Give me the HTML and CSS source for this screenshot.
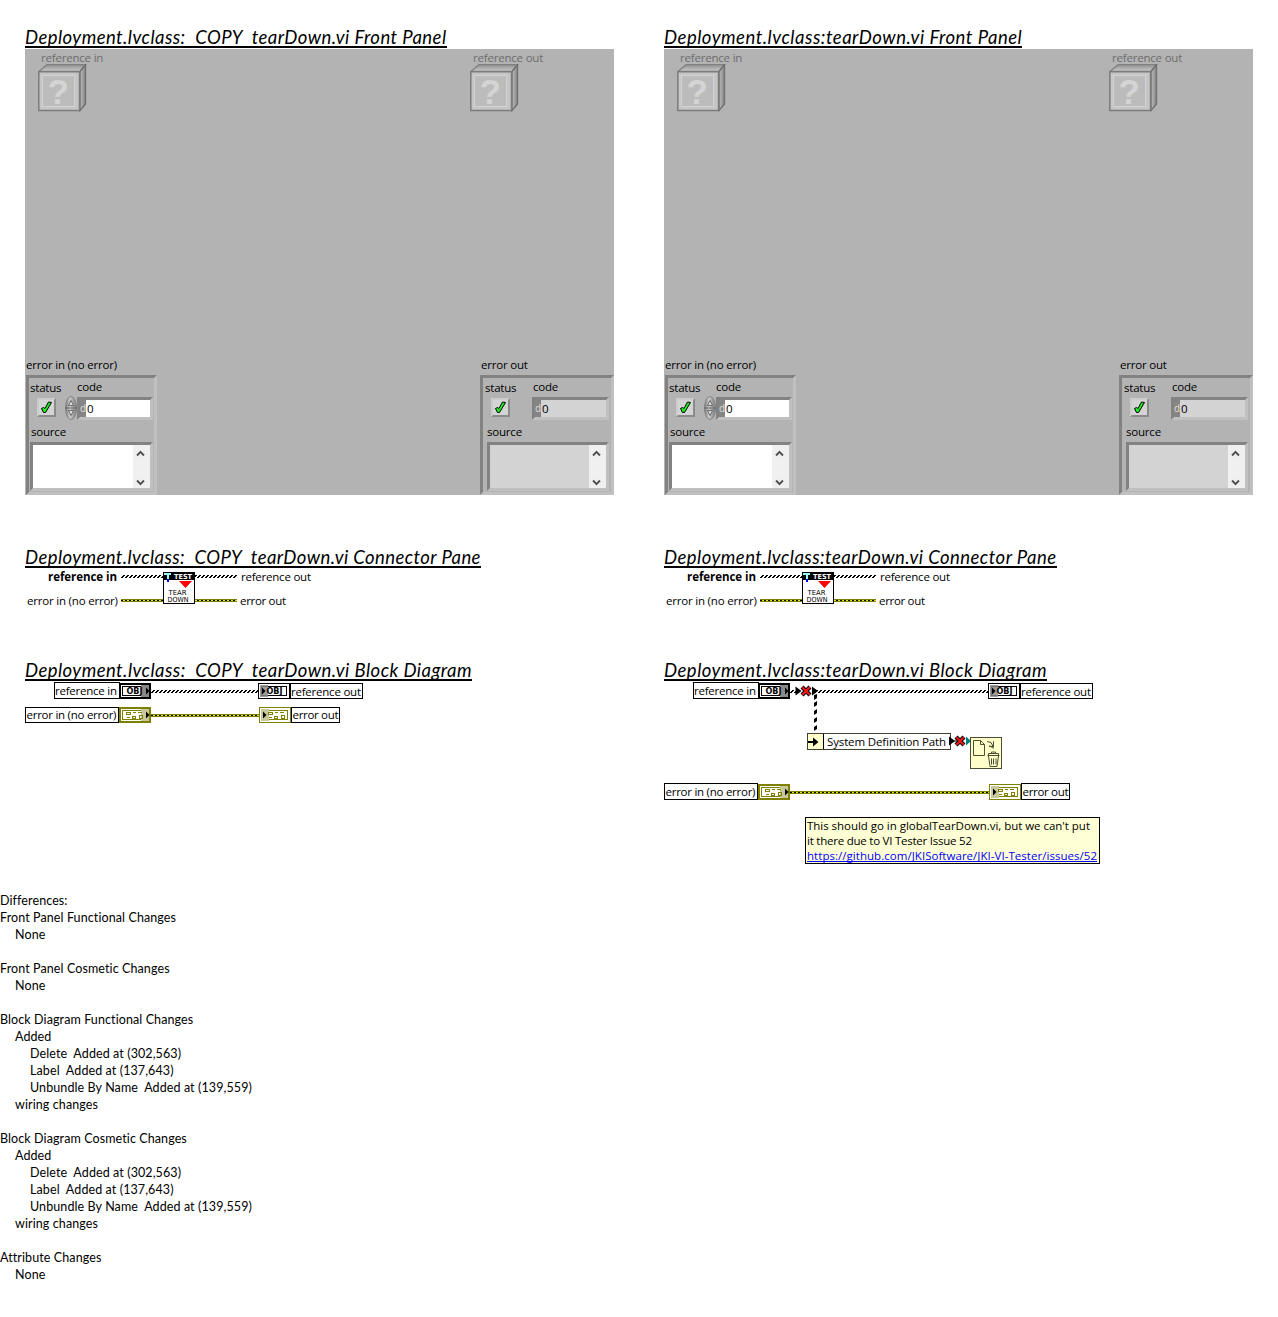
FILE: index.html
```
<!DOCTYPE html>
<html lang="en">
<head>
<meta charset="utf-8">
<title>Deployment.lvclass tearDown.vi</title>
<link rel="stylesheet" href="styles.css">
</head>
<body>
<svg class="defs" width="0" height="0" aria-hidden="true">
  <defs>
    <linearGradient id="cubeTop" x1="0" y1="0" x2="0" y2="1"><stop offset="0" stop-color="#929292"/><stop offset="1" stop-color="#cacaca"/></linearGradient>
    <linearGradient id="cubeSide" x1="0" y1="0" x2="1" y2="0"><stop offset="0" stop-color="#bdbdbd"/><stop offset="1" stop-color="#858585"/></linearGradient>
    <linearGradient id="knob" x1="0" y1="0" x2="1" y2="0"><stop offset="0" stop-color="#777"/><stop offset=".4" stop-color="#ccc"/><stop offset="1" stop-color="#777"/></linearGradient>
    <pattern id="objWire" width="4" height="3" patternUnits="userSpaceOnUse"><path d="M0 0h4v3h-4z" fill="#fff"/><path d="M2 0h2v1h-2zM1 1h2v1h-2zM0 2h2v1h-2z"/></pattern>
    <pattern id="errWire" width="4" height="4" patternUnits="userSpaceOnUse"><path d="M0 0h4v4h-4z" fill="#808000"/><path d="M0 1h4v1h-4z" fill="#e6e628"/><path d="M0 1h2v1h-2z"/></pattern>
    <symbol id="cube" viewBox="0 0 49 48">
      <path d="M1 7.500 9 .700H47.500L42 7.500z" fill="url(#cubeTop)" stroke="#808080" stroke-width="1.300"/>
      <path d="M42 7.500 47.500 .700V40L42 46.500z" fill="url(#cubeSide)" stroke="#6e6e6e" stroke-width="1.300"/>
      <path d="M.800 7.800H41.500V46.500H.800z" class="cube-face" stroke="#7c7c7c" stroke-width="1.500"/>
      <path d="M4.500 11.500H36.500V42.500H4.500z" class="cube-inset" stroke="#d2d2d2"/>
      <text x="9.500" y="39.500" class="cube-mark">?</text>
    </symbol>
    <symbol id="check" viewBox="0 0 13 13"><path d="M1.500 7.500 3.500 6.500 5 7.500 8.500 1 11.500 1.500 5.500 11.500H3.500z" fill="#1cf01c" stroke="#000"/></symbol>
    <symbol id="spin" viewBox="0 0 12 24"><ellipse cx="6" cy="12" rx="5.500" ry="11.500" fill="url(#knob)" stroke="#858585"/><path d="M0 12h12" stroke="#666"/><path d="M3.500 9.500 6 4.500 8.500 9.500zM3.500 14.500 6 19.500 8.500 14.500z" fill="#ddd" stroke="#555" stroke-width=".8"/></symbol>
    <symbol id="objIn" viewBox="0 0 32 16"><g shape-rendering="crispEdges"><path d="M0 0h32v16H0z"/><path d="M2 2h28v12H2z" fill="#fff"/><path d="M3.500 3.500h25v9h-25z" fill="#fff" stroke="#000"/><path d="M22 2h8v12h-8z" fill="#888"/></g><text x="7.500" y="11" class="obj" textLength="16" lengthAdjust="spacingAndGlyphs">OBJ</text><path d="M27 4.500v7l3.500-3.500z"/></symbol>
    <symbol id="objOut" viewBox="0 0 32 16"><g shape-rendering="crispEdges"><path d="M.500.500h31v15H.500z" fill="#fff" stroke="#000"/><path d="M3.500 3.500h25v9h-25z" fill="none" stroke="#000"/><path d="M2 2h8v12H2z" fill="#888" opacity=".85"/></g><text x="8.500" y="11" class="obj" textLength="16" lengthAdjust="spacingAndGlyphs">OBJ</text><path d="M4 4.500v7l3.500-3.500z"/></symbol>
    <symbol id="cells" viewBox="0 0 20 10"><path d="M1.500 1.500h4v2h-4zM8 1.500h3M13 1.500h4M1.500 6.500h3M7.500 5.500h3v2h-3zM14.500 4.500h3v3h-3z" fill="none" stroke="#808000" shape-rendering="crispEdges"/></symbol>
    <symbol id="errIn" viewBox="0 0 32 16"><g shape-rendering="crispEdges"><path d="M0 0h32v16H0z" fill="#808000"/><path d="M2 2h28v12H2z" fill="#fff"/><path d="M3.500 3.500h25v9h-25z" fill="#fff" stroke="#808000"/><path d="M22 2h8v12h-8z" fill="#c8c89a"/></g><use href="#cells" x="6" y="4" width="20" height="10"/><path d="M27 4.500v7l3.500-3.500z"/></symbol>
    <symbol id="errOut" viewBox="0 0 32 16"><g shape-rendering="crispEdges"><path d="M.500.500h31v15H.500z" fill="#fff" stroke="#808000"/><path d="M3.500 3.500h25v9h-25z" fill="none" stroke="#808000"/><path d="M2 2h8v12H2z" fill="#c8c89a"/></g><use href="#cells" x="8" y="4" width="20" height="10"/><path d="M4 4.500v7l3.500-3.500z"/></symbol>
    <symbol id="broken" viewBox="0 0 12 12"><path d="M2 2 10 10M10 2 2 10" stroke="#000" stroke-width="4.200"/><path d="M2.300 2.300 9.700 9.700M9.700 2.300 2.300 9.700" stroke="#f01818" stroke-width="2.200"/></symbol>
    <symbol id="viIcon" viewBox="0 0 32 32">
      <g shape-rendering="crispEdges"><path d="M.500.500h31v31H.500z" fill="#fff" stroke="#000"/><path d="M0 0h32v8H0z"/><path d="M1 1h7v2H1z" fill="#9ff"/><path d="M4 3h2v5H4z" fill="#9ff"/><path d="M4 7h2v3H4z" fill="#00f"/></g>
      <path d="M16 9h13l-6.500 7z" fill="#f00"/>
      <text x="11" y="6.500" class="tiny tiny-light" textLength="18" lengthAdjust="spacingAndGlyphs">TEST</text>
      <text x="5.500" y="23" class="tiny" textLength="18" lengthAdjust="spacingAndGlyphs">TEAR</text>
      <text x="4.500" y="30" class="tiny" textLength="21" lengthAdjust="spacingAndGlyphs">DOWN</text>
    </symbol>
    <g id="connector">
      <text x="48" y="581" class="strong" textLength="69">reference in</text>
      <text x="27" y="605" textLength="91">error in (no error)</text>
      <text x="241" y="581" textLength="70">reference out</text>
      <text x="240" y="605" textLength="46">error out</text>
      <g transform="translate(121 575)"><path d="M0 0h42v3H0zM74 0h42v3H74z" fill="url(#objWire)"/></g>
      <g transform="translate(121 599)" shape-rendering="crispEdges"><path d="M0 0h42v3H0zM74 0h42v3H74z" fill="url(#errWire)"/></g>
      <use href="#viIcon" x="163" y="572" width="32" height="32"/>
    </g>
  </defs>
</svg>

<main class="compare">
  <section class="vi">
    <h2 class="title t-front-copy">Deployment.lvclass:  COPY  tearDown.vi Front Panel</h2>
    <div class="panel">
      <div class="ref ref-in"><span>reference in</span><svg width="49" height="48"><use href="#cube"/></svg></div>
      <div class="ref ref-out"><span>reference out</span><svg width="49" height="48"><use href="#cube"/></svg></div>
      <div class="err err-in"><span class="caption">error in (no error)</span>
        <div class="cluster">
          <div class="labels"><span>status</span><span>code</span></div>
          <div class="values"><i class="led"><svg width="13" height="13"><use href="#check"/></svg></i><svg class="spin" width="12" height="24"><use href="#spin"/></svg><div class="num"><b>d</b><span>0</span></div></div>
          <div class="source">source</div>
          <div class="text"><div class="bar"><svg width="16" height="42" viewBox="0 0 16 42"><path d="M4 10.500 7.500 7 11 10.500M4 35.500 7.500 39 11 35.500"/></svg></div></div>
        </div>
      </div>
      <div class="err err-out"><span class="caption">error out</span>
        <div class="cluster">
          <div class="labels"><span>status</span><span>code</span></div>
          <div class="values"><i class="led"><svg width="13" height="13"><use href="#check"/></svg></i><div class="num"><b>d</b><span>0</span></div></div>
          <div class="source">source</div>
          <div class="text"><div class="bar"><svg width="16" height="42" viewBox="0 0 16 42"><path d="M4 10.500 7.500 7 11 10.500M4 35.500 7.500 39 11 35.500"/></svg></div></div>
        </div>
      </div>
    </div>
    <h2 class="title t-conn-copy">Deployment.lvclass:  COPY  tearDown.vi Connector Pane</h2>
    <svg class="pane" viewBox="25 569 589 39"><use href="#connector"/></svg>
    <h2 class="title t-block-copy">Deployment.lvclass:  COPY  tearDown.vi Block Diagram</h2>
    <svg class="diagram" viewBox="25 682 589 190">
      <g class="box"><path d="M54.500 682.500h65v16h-65zM290.500 683.500h72v15h-72zM25.500 707.500h93v15h-93zM291.500 707.500h48v15h-48z"/></g>
      <text x="55" y="695" textLength="62">reference in</text><text x="291" y="696" textLength="70">reference out</text>
      <text x="26.500" y="719" textLength="90">error in (no error)</text><text x="292.500" y="719" textLength="46">error out</text>
      <g transform="translate(151 690)"><path d="M0 0h107v3H0z" fill="url(#objWire)"/></g>
      <g transform="translate(151 714)" shape-rendering="crispEdges"><path d="M0 0h108v3H0z" fill="url(#errWire)"/></g>
      <use href="#objIn" x="119" y="683" width="32" height="16"/><use href="#objOut" x="258" y="683" width="32" height="16"/>
      <use href="#errIn" x="119" y="707" width="32" height="16"/><use href="#errOut" x="259" y="707" width="32" height="16"/>
    </svg>
  </section>

  <section class="vi">
    <h2 class="title t-front">Deployment.lvclass:tearDown.vi Front Panel</h2>
    <div class="panel">
      <div class="ref ref-in"><span>reference in</span><svg width="49" height="48"><use href="#cube"/></svg></div>
      <div class="ref ref-out"><span>reference out</span><svg width="49" height="48"><use href="#cube"/></svg></div>
      <div class="err err-in"><span class="caption">error in (no error)</span>
        <div class="cluster">
          <div class="labels"><span>status</span><span>code</span></div>
          <div class="values"><i class="led"><svg width="13" height="13"><use href="#check"/></svg></i><svg class="spin" width="12" height="24"><use href="#spin"/></svg><div class="num"><b>d</b><span>0</span></div></div>
          <div class="source">source</div>
          <div class="text"><div class="bar"><svg width="16" height="42" viewBox="0 0 16 42"><path d="M4 10.500 7.500 7 11 10.500M4 35.500 7.500 39 11 35.500"/></svg></div></div>
        </div>
      </div>
      <div class="err err-out"><span class="caption">error out</span>
        <div class="cluster">
          <div class="labels"><span>status</span><span>code</span></div>
          <div class="values"><i class="led"><svg width="13" height="13"><use href="#check"/></svg></i><div class="num"><b>d</b><span>0</span></div></div>
          <div class="source">source</div>
          <div class="text"><div class="bar"><svg width="16" height="42" viewBox="0 0 16 42"><path d="M4 10.500 7.500 7 11 10.500M4 35.500 7.500 39 11 35.500"/></svg></div></div>
        </div>
      </div>
    </div>
    <h2 class="title t-conn">Deployment.lvclass:tearDown.vi Connector Pane</h2>
    <svg class="pane" viewBox="25 569 589 39"><use href="#connector"/></svg>
    <h2 class="title t-block">Deployment.lvclass:tearDown.vi Block Diagram</h2>
    <svg class="diagram" viewBox="664 682 589 190">
      <g class="box"><path d="M693.500 682.500h65v16h-65zM1020.500 683.500h72v15h-72zM664.500 783.500h93v16h-93zM1021.500 783.500h48v16h-48z"/></g>
      <text x="694" y="695" textLength="62">reference in</text><text x="1021" y="696" textLength="70">reference out</text>
      <text x="665.500" y="796" textLength="90">error in (no error)</text><text x="1022.500" y="796" textLength="46">error out</text>
      <g transform="translate(790 690)"><path d="M0 0h6v3H0zM25 0h173v3H25z" fill="url(#objWire)"/></g>
      <g transform="translate(790 791)" shape-rendering="crispEdges"><path d="M0 0h199v3H0z" fill="url(#errWire)"/></g>
      <use href="#objIn" x="758" y="683" width="32" height="16"/><use href="#objOut" x="988" y="683" width="32" height="16"/>
      <use href="#errIn" x="758" y="784" width="32" height="16"/><use href="#errOut" x="989" y="784" width="32" height="16"/>
      <path d="M795.500 686.500v9l6-4.500zM812 686.500v9l6-4.500z"/>
      <use href="#broken" x="800" y="685" width="12" height="12"/>
      <path d="M814 695l3-1v4l-3 2zM814 703l3-2v4l-3 2zM814 711l3-2v4l-3 2zM814 719l3-2v4l-3 2zM814 727l3-2v4l-3 2z"/>
      <g shape-rendering="crispEdges"><path d="M807.500 733.500h143v16h-143z" fill="#fff" stroke="#404030"/><path d="M808 734h15v15h-15z" fill="#ffffcc"/><path d="M823 734h1v15h-1z"/></g>
      <path d="M808 741h5v-3.500l5.500 4.500-5.500 4.500v-3.500h-5z"/>
      <text x="827" y="746" textLength="119">System Definition Path</text>
      <path d="M949 736.500v9l6-4.500z"/><path d="M954 740.500h3v1h-3z"/>
      <use href="#broken" x="954" y="735" width="12" height="12"/>
      <path d="M966 736.500v9l5-4.500z" fill="#008080"/>
      <g class="delete"><path d="M970.500 737.500h31v31h-31z" fill="#ffffcc" shape-rendering="crispEdges"/><path d="M973.500 740.500h7l4 4v11h-11zM980.500 740.500v4h4M987 741.500l4 1 2 4M989 746.500h4.500v-5M993.500 741.500v6M989.500 745.500l4 3M987.500 755.500h12M988.500 755.500v-2h10v2M991.500 753.500v-1.500h4v1.500M988.500 756l1.500 10.500h7l1.500-10.500M991.500 758.500v6M993.500 758.500v6M996 758.500v6"/></g>
      <path d="M805.500 817.500h294v46h-294z" fill="#ffffd6" stroke="#000" shape-rendering="crispEdges"/>
      <text x="807" y="830" textLength="283">This should go in globalTearDown.vi, but we can't put</text>
      <text x="807" y="845" textLength="165">it there due to VI Tester Issue 52</text>
      <text x="807" y="860" textLength="290" class="link">https://github.com/JKISoftware/JKI-VI-Tester/issues/52</text>
      <path d="M807 861h290v1h-290z" fill="#00f" shape-rendering="crispEdges"/>
    </svg>
  </section>
</main>

<pre class="report">Differences:
Front Panel Functional Changes
<span class="l1">None</span>

Front Panel Cosmetic Changes
<span class="l1">None</span>

Block Diagram Functional Changes
<span class="l1">Added</span>
<span class="l2">Delete  Added at (302,563)</span>
<span class="l2">Label  Added at (137,643)</span>
<span class="l2">Unbundle By Name  Added at (139,559)</span>
<span class="l1">wiring changes</span>

Block Diagram Cosmetic Changes
<span class="l1">Added</span>
<span class="l2">Delete  Added at (302,563)</span>
<span class="l2">Label  Added at (137,643)</span>
<span class="l2">Unbundle By Name  Added at (139,559)</span>
<span class="l1">wiring changes</span>

Attribute Changes
<span class="l1">None</span></pre>
</body>
</html>
```
FILE: styles.css
```
* { box-sizing: border-box; }
body { margin: 0; background: #fff; color: #000; font: 11.5px/16px "Open Sans", "Noto Sans", sans-serif; }
.defs { display: block; position: absolute; }

.compare { display: grid; grid-template-columns: 589px 589px; column-gap: 50px; padding: 26px 25px 0; }
.vi { display: flex; flex-direction: column; align-items: flex-start; }
.title { margin: 0 0 1px; height: 22px; overflow: hidden; border-bottom: 2px solid #000; font: italic 400 18.5px/22px Lato, sans-serif; white-space: pre; }
.t-front-copy { letter-spacing: .444px; }
.t-conn-copy { letter-spacing: .413px; }
.t-block-copy { letter-spacing: .445px; }
.t-front { letter-spacing: .51px; }
.t-conn { letter-spacing: .468px; }
.t-block { letter-spacing: .493px; }

.panel { position: relative; width: 589px; height: 446px; margin-bottom: 51px; background: #b3b3b3; letter-spacing: -.2px; }
.ref { position: absolute; top: 1px; color: #6e6e6e; }
.ref span { display: block; height: 14px; padding-left: 3px; white-space: nowrap; }
.ref svg { display: block; }
.ref-in { left: 13px; }
.ref-out { left: 445px; }
.cube-face { fill: #c6c6c6; }
.cube-inset { fill: #bcbcbc; }
.ref-out .cube-face { fill: #bbb; }
.cube-mark { font: bold 35px "Liberation Sans", sans-serif; fill: #d4d4d4; }

.err { position: absolute; bottom: 0; }
.err-in { left: 1px; width: 131px; }
.err-out { left: 455px; width: 134px; }
.caption { display: block; height: 18px; white-space: nowrap; }
.err-out .caption { padding-left: 1px; }
.cluster { height: 120px; border: 3px solid; border-color: #828282 #c0c0c0 #c0c0c0 #828282; display: grid; grid-template-rows: 18px 24px 22px 49px; }
.labels { display: flex; line-height: 19px; padding-left: 1px; }
.labels span:first-child { width: 47px; }
.labels span:last-child { line-height: 18px; }
.err-out .labels { padding-left: 2px; }
.err-out .labels span:first-child { width: 48px; }
.values { display: flex; align-items: center; padding-left: 8px; }
.led { display: flex; align-items: center; justify-content: center; width: 19px; height: 19px; margin-top: -1px; border: 2px solid; border-color: #ccc #8a8a8a #8a8a8a #ccc; background: #d4d4d4; }
.spin { margin-left: 9px; }
.num { width: 76px; height: 23px; display: flex; border: 3px solid; border-color: #828282 #c0c0c0 #c0c0c0 #828282; background: #fff; line-height: 17px; }
.num b { width: 6px; overflow: hidden; background: #858585; color: #ddd; font-size: 10px; font-weight: 400; }
.num span { padding-left: 1px; }
.err-out .num { margin-left: 22px; width: 77px; background: #d3d3d3; }
.source { padding-left: 2px; line-height: 23px; }
.err-out .source { padding-left: 4px; }
.text { width: 122px; margin-left: 1px; border: 3px solid; border-color: #828282 #c0c0c0 #c0c0c0 #828282; background: #fff; display: flex; justify-content: flex-end; }
.err-in .text { width: 123px; }
.err-out .text { margin-left: 4px; background: #d3d3d3; }
.bar { width: 17px; background: #f0f0f0; }
.bar path { fill: none; stroke: #555; stroke-width: 2; }

.pane { display: block; width: 589px; height: 39px; margin-bottom: 51px; }
.diagram { display: block; width: 589px; height: 190px; }
text { font: 11.5px "Open Sans", "Noto Sans", sans-serif; }
.strong { font-weight: 700; font-size: 11.5px; }
.box { fill: #fff; stroke: #000; shape-rendering: crispEdges; }
.obj { font: bold 8.5px "DejaVu Sans", sans-serif; }
.tiny { font: 7px "DejaVu Sans", sans-serif; }
.tiny-light { fill: #fff; font-weight: bold; }
.link { fill: #00f; }
.delete { fill: none; stroke: #4d4d33; }

.report { margin: 20px 0 0; font: 12.5px/17px Lato, sans-serif; letter-spacing: .1px; }
.l1 { padding-left: 15px; }
.l2 { padding-left: 30px; }
```
